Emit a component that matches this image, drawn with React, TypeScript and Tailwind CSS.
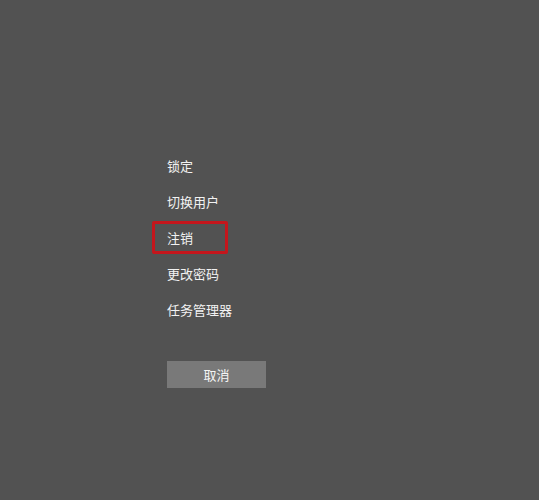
import React from "react";

const items = ["锁定", "切换用户", "注销", "更改密码", "任务管理器"];

export default function App() {
  return (
    <div
      className="w-[539px] h-[500px] bg-[#525252] pt-[148px] pl-[167px] text-[#f2f2f2]"
      style={{ fontFamily: '"Noto Sans CJK SC", "Noto Sans", sans-serif' }}
    >
      <div className="flex flex-col">
        {items.map((t) => (
          <div key={t} className="relative h-[36px] leading-[36px] text-[13px]">
            {t}
            {t === "注销" && (
              <div className="absolute left-[-15px] top-[1px] w-[76px] h-[33px] border-[3px] border-[#c4161c] rounded-[2px]" />
            )}
          </div>
        ))}
      </div>
      <button className="mt-[33px] w-[99px] h-[27px] bg-[#797979] text-[13px] text-[#f5f5f5] flex items-center justify-center">
        取消
      </button>
    </div>
  );
}
